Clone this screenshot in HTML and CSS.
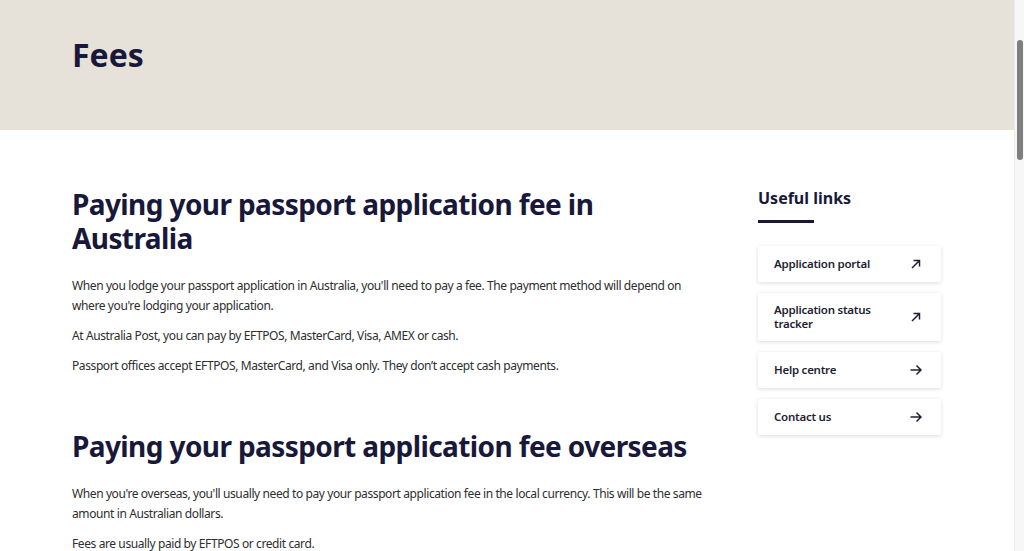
FILE: index.html
```html
<!DOCTYPE html>
<html lang="en">
<head>
    <meta charset="UTF-8">
    <meta name="viewport" content="width=device-width, initial-scale=1.0">
    <title>Fees - Australian Passport Office</title>
    <link rel="stylesheet" href="styles.css">
</head>
<body>
    <div class="page">
        <header class="banner">
            <h1>Fees</h1>
        </header>
        <div class="content">
            <main class="main-col">
                <section class="fee-section">
                    <h2>Paying your passport application fee in Australia</h2>
                    <p>When you lodge your passport application in Australia, you'll need to pay a fee. The payment method will depend on where you're lodging your application.</p>
                    <p>At Australia Post, you can pay by EFTPOS, MasterCard, Visa, AMEX or cash.</p>
                    <p>Passport offices accept EFTPOS, MasterCard, and Visa only. They don’t accept cash payments.</p>
                </section>
                <section class="fee-section">
                    <h2>Paying your passport application fee overseas</h2>
                    <p>When you're overseas, you'll usually need to pay your passport application fee in the local currency. This will be the same amount in Australian dollars.</p>
                    <p>Fees are usually paid by EFTPOS or credit card.</p>
                </section>
            </main>
            <aside class="side-col">
                <h3>Useful links</h3>
                <div class="link-list">
                    <a class="link-card" href="#">
                        <span>Application portal</span>
                        <svg class="icon" viewBox="0 0 12 12"><path d="M2 10 L9.5 2.5 M3.5 2.5 H9.5 V8.5"/></svg>
                    </a>
                    <a class="link-card" href="#">
                        <span>Application status tracker</span>
                        <svg class="icon" viewBox="0 0 12 12"><path d="M2 10 L9.5 2.5 M3.5 2.5 H9.5 V8.5"/></svg>
                    </a>
                    <a class="link-card" href="#">
                        <span>Help centre</span>
                        <svg class="icon" viewBox="0 0 12 12"><path d="M0.5 6 H11 M6.5 1.5 L11 6 L6.5 10.5"/></svg>
                    </a>
                    <a class="link-card" href="#">
                        <span>Contact us</span>
                        <svg class="icon" viewBox="0 0 12 12"><path d="M0.5 6 H11 M6.5 1.5 L11 6 L6.5 10.5"/></svg>
                    </a>
                </div>
            </aside>
        </div>
    </div>
    <div class="scrollbar">
        <div class="thumb"></div>
    </div>
</body>
</html>
```

FILE: styles.css
```css
body {
    font-family: "Noto Sans", Arial, sans-serif;
    background-color: #fff;
    color: #2e2e2e;
    margin: 0;
    padding: 0;
    display: flex;
    height: 100vh;
    overflow: hidden;
}
.page {
    flex: 1;
    min-width: 0;
}
.banner {
    background-color: #e6e2d9;
    height: 130px;
    padding: 0 72px;
    box-sizing: border-box;
}
h1 {
    margin: 0;
    padding-top: 33px;
    font-size: 32px;
    line-height: 44px;
    font-weight: 700;
    color: #18183a;
}
.content {
    display: grid;
    grid-template-columns: 1fr 183px;
    column-gap: 56px;
    padding: 0 73px 0 72px;
}
.main-col {
    padding-top: 57px;
}
h2 {
    margin: 0 0 21px;
    font-size: 28px;
    line-height: 34px;
    font-weight: 700;
    letter-spacing: -0.6px;
    color: #18183a;
}
.fee-section {
    margin-bottom: 53px;
}
p {
    margin: 0 0 10px;
    font-size: 12px;
    line-height: 20px;
    letter-spacing: -0.4px;
}
.side-col {
    padding-top: 56px;
}
h3 {
    margin: 0;
    font-size: 16px;
    line-height: 24px;
    font-weight: 700;
    color: #18183a;
}
h3::after {
    content: "";
    display: block;
    width: 56px;
    height: 3px;
    background-color: #18183a;
    margin-top: 10px;
}
.link-list {
    display: flex;
    flex-direction: column;
    gap: 11px;
    margin-top: 23px;
}
.link-card {
    display: flex;
    align-items: center;
    justify-content: space-between;
    gap: 12px;
    min-height: 36px;
    padding: 10px 19px 10px 16px;
    box-sizing: border-box;
    background-color: #fff;
    box-shadow: 0 1px 4px rgba(0, 0, 0, 0.14);
    border-radius: 2px;
    color: #1f1f33;
    text-decoration: none;
    font-size: 11.5px;
    line-height: 14px;
    font-weight: 600;
    letter-spacing: -0.25px;
}
.icon {
    width: 12px;
    height: 12px;
    flex-shrink: 0;
    fill: none;
    stroke: #1f1f33;
    stroke-width: 1.5;
}
.scrollbar {
    width: 10px;
    background-color: #f7f7f7;
    border-left: 1px solid #ececec;
    padding-top: 40px;
    box-sizing: border-box;
    display: flex;
    justify-content: center;
}
.thumb {
    width: 6px;
    height: 120px;
    border-radius: 3px;
    background-color: #7f7f7f;
}
```
